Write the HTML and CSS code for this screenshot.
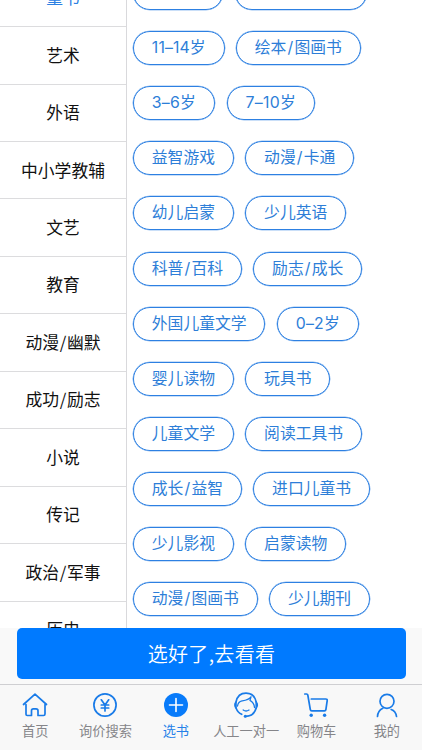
FILE: index.html
```
<!DOCTYPE html>
<html lang="zh-CN">
<head>
<meta charset="utf-8">
<meta name="viewport" content="width=device-width, initial-scale=1">
<title>选书</title>
<link rel="stylesheet" href="styles.css">
</head>
<body>
<div class="app">
  <main class="picker">
    <nav class="categories">
      <div class="category active">童书</div>
      <div class="category">艺术</div>
      <div class="category">外语</div>
      <div class="category">中小学教辅</div>
      <div class="category">文艺</div>
      <div class="category">教育</div>
      <div class="category">动漫<i>/</i>幽默</div>
      <div class="category">成功<i>/</i>励志</div>
      <div class="category">小说</div>
      <div class="category">传记</div>
      <div class="category">政治<i>/</i>军事</div>
      <div class="category">历史</div>
    </nav>
    <section class="tags">
      <div class="row"><span class="tag short"></span><span class="tag long"></span></div>
      <div class="row"><span class="tag age-wide">11–14岁</span><span class="tag">绘本<i>/</i>图画书</span></div>
      <div class="row"><span class="tag age">3–6岁</span><span class="tag age-mid">7–10岁</span></div>
      <div class="row"><span class="tag">益智游戏</span><span class="tag">动漫<i>/</i>卡通</span></div>
      <div class="row"><span class="tag">幼儿启蒙</span><span class="tag">少儿英语</span></div>
      <div class="row"><span class="tag">科普<i>/</i>百科</span><span class="tag">励志<i>/</i>成长</span></div>
      <div class="row"><span class="tag">外国儿童文学</span><span class="tag age">0–2岁</span></div>
      <div class="row"><span class="tag">婴儿读物</span><span class="tag">玩具书</span></div>
      <div class="row"><span class="tag">儿童文学</span><span class="tag">阅读工具书</span></div>
      <div class="row"><span class="tag">成长<i>/</i>益智</span><span class="tag">进口儿童书</span></div>
      <div class="row"><span class="tag">少儿影视</span><span class="tag">启蒙读物</span></div>
      <div class="row"><span class="tag">动漫<i>/</i>图画书</span><span class="tag">少儿期刊</span></div>
    </section>
  </main>
  <div class="action"><button class="submit">选好了,去看看</button></div>
  <footer class="tabbar">
    <div class="tab">
      <svg viewBox="0 0 26 26"><path d="M1.5 12.5 13 2.2 24.5 12.5M4 12.5V22.2Q4 23.5 5.3 23.5H9.5V18.8Q9.5 16.8 11.3 16.8H14Q16 16.8 16 18.8V23.5H21.5Q23 23.5 23 22V12.5"/></svg>
      <span>首页</span>
    </div>
    <div class="tab">
      <svg viewBox="0 0 26 26"><circle cx="13" cy="13" r="11.1"/><path d="M9.3 7.8 13 13 16.7 7.8M13 13V19M9.3 13H16.7M9.3 16H16.7"/></svg>
      <span>询价搜索</span>
    </div>
    <div class="tab selected">
      <svg viewBox="0 0 26 26"><circle class="solid" cx="13" cy="13" r="12"/><path class="plus" d="M13 6.5V19.5M6.5 13H19.5"/></svg>
      <span>选书</span>
    </div>
    <div class="tab">
      <svg viewBox="0 0 26 26"><path d="M3 10C4.2 4.5 8 1.2 13 1.2S22 4.5 23.2 10M3 16C4.2 19 6 21.2 8.7 22.3M23.2 16C21.8 21.2 18 24.4 12.3 24.4"/><path class="fine" d="M4.5 14C5 11 6.5 9.4 9 8.9 12.5 8.3 15.8 7.8 18 4.8L17 8.4C19.8 10 21.3 12.4 21.5 15.5M10.2 18Q13 20 16 18"/><path class="solid" d="M3.8 9C.2 9.5.2 16.4 3.8 17ZM22.4 9C26 9.5 26 16.4 22.4 17Z"/><circle class="solid" cx="12.3" cy="24.3" r="1.5"/></svg>
      <span>人工一对一</span>
    </div>
    <div class="tab">
      <svg viewBox="0 0 26 26"><path d="M1.8 2H3.6Q4.6 2 4.8 3L7.3 17.5Q7.5 18.8 8.7 18.8H21.5Q22.7 18.8 22.9 17.5L24.2 8.6Q24.4 7 22.8 7H8.3"/><circle class="solid" cx="8.2" cy="23.2" r="1.7"/><circle class="solid" cx="21.6" cy="23.2" r="1.7"/></svg>
      <span>购物车</span>
    </div>
    <div class="tab">
      <svg viewBox="0 0 26 26"><circle cx="13" cy="9.3" r="7"/><path d="M3.5 24.5C3.7 20.7 5.5 18 8.8 16.3M17.2 17.5C20.5 18.6 22 20.8 22.5 24.5"/></svg>
      <span>我的</span>
    </div>
  </footer>
</div>
</body>
</html>
```
FILE: styles.css
```
* { box-sizing: border-box; }
body {
  margin: 0;
  font-family: "Noto Sans CJK SC", sans-serif;
  background: #fff;
}
i { display: inline-block; width: 8px; text-align: center; font-style: normal; }
.app {
  display: flex;
  flex-direction: column;
  height: 750px;
  overflow: hidden;
  background: #f9f9f9;
}
.picker {
  display: flex;
  flex: none;
  height: 628px;
  overflow: hidden;
  background: #fff;
}
.categories {
  flex: none;
  width: 127px;
  height: 690px;
  margin-top: -30.3px;
  border-right: 1px solid #d9d9dc;
}
.category {
  display: flex;
  align-items: center;
  justify-content: center;
  height: 57.45px;
  padding-bottom: 1.4px;
  border-bottom: 1px solid #dcdcde;
  font-size: 16.8px;
  line-height: 24px;
  color: #111;
  white-space: nowrap;
}
.category.active { color: #2c80e2; }
.tags {
  display: flex;
  flex-direction: column;
  gap: 21.15px;
  margin-top: -24.2px;
  padding-left: 6px;
}
.row { display: flex; flex: none; gap: 11.5px; height: 34px; }
.tag {
  display: flex;
  flex: none;
  align-items: center;
  justify-content: center;
  height: 34px;
  padding: 0 17.8px;
  border: 1px solid #2d80e2;
  border-radius: 17px;
  box-shadow: 0 0 0 .3px #2d80e2;
  color: #2d7ed8;
  font-family: Inter, "Noto Sans CJK SC", sans-serif;
  font-size: 15.8px;
  font-weight: 400;
  line-height: 24px;
  white-space: nowrap;
}
.short { width: 90px; }
.long { width: 132px; }
.age { width: 82px; padding: 0; letter-spacing: .3px; }
.age-mid { width: 88.5px; padding: 0; letter-spacing: .3px; }
.age-wide { width: 91.5px; padding: 0; letter-spacing: .1px; }
.action { flex: none; height: 56px; padding: 0 16px 0 17px; }
.submit {
  display: block;
  width: 100%;
  height: 51px;
  padding: 0;
  border: 0;
  border-radius: 5px;
  background: #007aff;
  color: #fff;
  font: 350 20px/50px "Noto Sans CJK SC", sans-serif;
  letter-spacing: .3px;
}
.tabbar {
  display: grid;
  grid-template-columns: repeat(6, 1fr);
  flex: none;
  height: 66px;
  border-top: 1px solid #cfcfd2;
  background: #f8f8f8;
}
.tab {
  display: flex;
  flex-direction: column;
  align-items: center;
  padding-top: 7px;
  color: #858589;
  font-size: 13.2px;
  font-weight: 400;
  line-height: 20px;
  white-space: nowrap;
}
.tab span { margin-top: 3px; }
.tab svg {
  display: block;
  width: 26px;
  height: 26px;
  fill: none;
  stroke: #197be8;
  stroke-width: 1.7;
  stroke-linecap: round;
  stroke-linejoin: round;
}
.tab .solid { fill: #197be8; stroke: none; }
.tab .fine { stroke-width: 1.3; }
.selected { color: #2580e8; }
.selected .solid { fill: #087bfa; }
.tab .plus { stroke: #fff; stroke-width: 1.6; }
```
